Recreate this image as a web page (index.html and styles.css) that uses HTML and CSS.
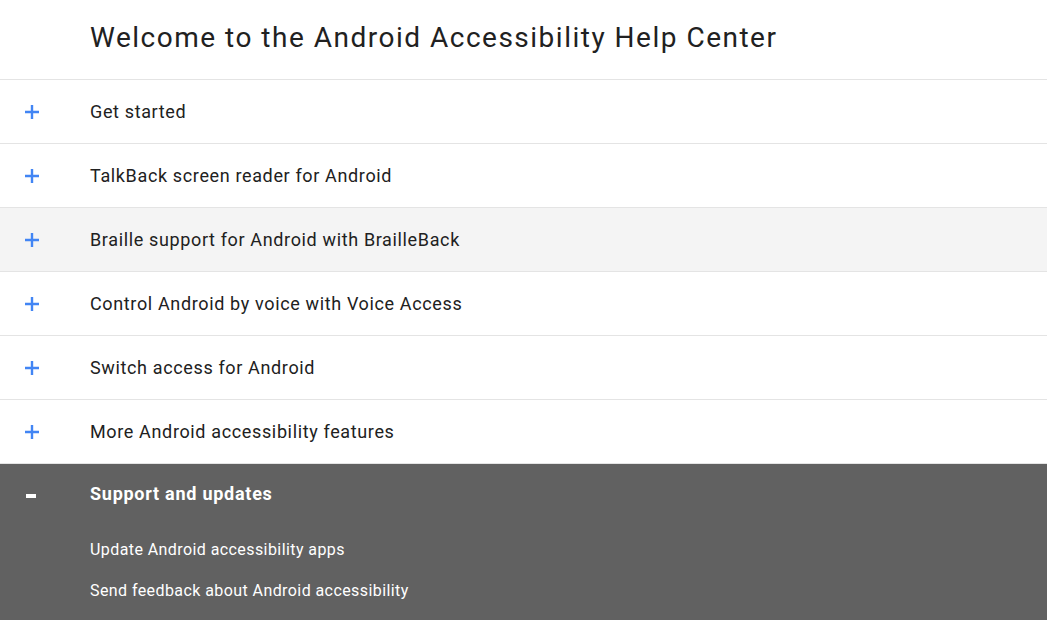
FILE: index.html
```html
<!DOCTYPE html>
<html>
<head>
<meta charset="utf-8">
<link rel="stylesheet" href="styles.css">
</head>
<body>
<header class="header"><h1 class="title">Welcome to the Android Accessibility Help Center</h1></header>
<ul class="list">
  <li class="row"><span class="icon"><svg class="plus" width="16" height="16" viewBox="0 0 16 16"><path d="M8 1v14M1 8h14" stroke="#4285f4" stroke-width="2.4"/></svg></span><span class="label">Get started</span></li>
  <li class="row"><span class="icon"><svg class="plus" width="16" height="16" viewBox="0 0 16 16"><path d="M8 1v14M1 8h14" stroke="#4285f4" stroke-width="2.4"/></svg></span><span class="label">TalkBack screen reader for Android</span></li>
  <li class="row hover"><span class="icon"><svg class="plus" width="16" height="16" viewBox="0 0 16 16"><path d="M8 1v14M1 8h14" stroke="#4285f4" stroke-width="2.4"/></svg></span><span class="label">Braille support for Android with BrailleBack</span></li>
  <li class="row"><span class="icon"><svg class="plus" width="16" height="16" viewBox="0 0 16 16"><path d="M8 1v14M1 8h14" stroke="#4285f4" stroke-width="2.4"/></svg></span><span class="label">Control Android by voice with Voice Access</span></li>
  <li class="row"><span class="icon"><svg class="plus" width="16" height="16" viewBox="0 0 16 16"><path d="M8 1v14M1 8h14" stroke="#4285f4" stroke-width="2.4"/></svg></span><span class="label">Switch access for Android</span></li>
  <li class="row"><span class="icon"><svg class="plus" width="16" height="16" viewBox="0 0 16 16"><path d="M8 1v14M1 8h14" stroke="#4285f4" stroke-width="2.4"/></svg></span><span class="label">More Android accessibility features</span></li>
</ul>
<section class="open">
  <div class="row open-head"><span class="icon"><span class="minus"></span></span><span class="label">Support and updates</span></div>
  <ul class="sub">
    <li>Update Android accessibility apps</li>
    <li>Send feedback about Android accessibility</li>
  </ul>
</section>
</body>
</html>
```
FILE: styles.css
```css
html, body { margin: 0; padding: 0; background: #fff; }
body { font-family: Roboto, "Noto Sans", sans-serif; color: #212121; }
.header { border-bottom: 1px solid #e4e4e4; display: flex; align-items: center; padding-left: 90px; box-sizing: border-box; height: 80px; padding-bottom: 4px; }
.title { margin: 0; font-size: 28px; font-weight: 400; color: #212121; letter-spacing: 1.5px; }
.list { list-style: none; margin: 0; padding: 0; }
.row { height: 63px; border-bottom: 1px solid #e4e4e4; display: flex; align-items: center; font-size: 18px; }
.row.hover { background: #f4f4f4; }
.icon { width: 90px; box-sizing: border-box; padding-left: 24px; display: flex; align-items: center; }
.plus { display: block; }
.label { color: #212121; letter-spacing: 0.64px; }
.open { background: #616161; color: #fff; padding-bottom: 30px; }
.open-head { border-bottom: none; padding-bottom: 6px; box-sizing: border-box; height: 64px; }
.open-head .label { color: #fff; font-weight: 700; letter-spacing: 0.74px; }
.minus { display: block; width: 10px; height: 4px; background: #fff; margin-left: 2px; margin-top: 6px; }
.sub { list-style: none; margin: 0; padding: 1px 0 0 90px; font-size: 16px; }
.sub li { height: 41px; line-height: 41px; color: #fff; letter-spacing: 0.42px; }
```
